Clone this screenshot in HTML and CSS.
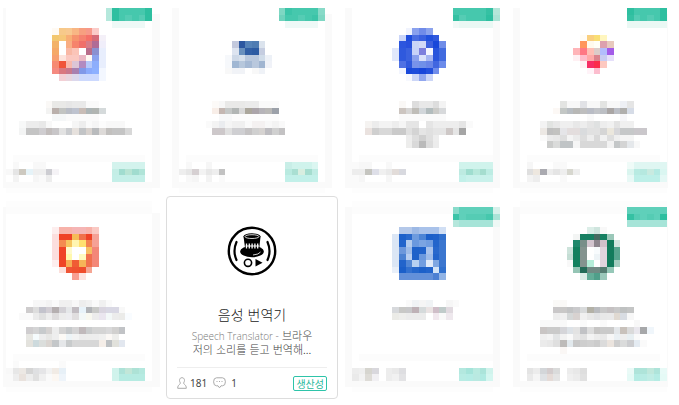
FILE: index.html
```html
<!DOCTYPE html>
<html lang="ko">
<head>
    <meta charset="UTF-8">
    <meta name="viewport" content="width=device-width, initial-scale=1.0">
    <title>음성 번역기</title>
    <link rel="stylesheet" href="styles.css">
</head>
<body>
    <main class="card-grid">
        <div class="card" data-mosaic="0"></div>
        <div class="card" data-mosaic="1"></div>
        <div class="card" data-mosaic="2"></div>
        <div class="card" data-mosaic="3"></div>
        <div class="card lower" data-mosaic="4"></div>

        <article class="app-card">
            <svg class="app-icon" viewBox="0 0 50 50" aria-hidden="true">
                <circle cx="25" cy="25" r="23.2" fill="none" stroke="#000" stroke-width="2.4"/>
                <path d="M9.500 16 Q5.500 25 9.500 34 M40.500 16 Q44.500 25 40.500 34" fill="none" stroke="#000" stroke-width="2.2" stroke-linecap="round"/>
                <ellipse cx="25" cy="25.500" rx="11.800" ry="5.800"/>
                <path d="M16.500 10.500 L18.500 25 Q25 28 32 25 L33.500 10.500 Z"/>
                <ellipse cx="25" cy="10.500" rx="8.500" ry="3.200"/>
                <ellipse cx="25" cy="10.600" rx="7" ry="1.900" fill="none" stroke="#fff" stroke-width="0.800"/>
                <path d="M19.500 17.500 V22.500 M22.300 17.500 V22.500 M25.100 17.500 V22.500 M27.900 17.500 V22.500 M30.700 17.500 V22.500" stroke="#fff" stroke-width="1.300"/>
                <path d="M18.500 20 H32" stroke="#fff" stroke-width="1"/>
                <path d="M26 29 Q32 28.500 33.500 26" fill="none" stroke="#fff" stroke-width="0.800"/>
                <circle cx="21" cy="36.800" r="3.600" fill="none" stroke="#000" stroke-width="1.600"/>
                <path d="M28.500 33 L35.500 36.800 L28.500 40.600 Z"/>
            </svg>
            <h3 class="app-title">음성 번역기</h3>
            <p class="app-desc"><span class="latin">Speech Translator -</span> 브라우<br>저의 소리를 듣고 번역해...</p>
            <footer class="app-footer">
                <span class="stat">
                    <svg class="stat-icon person" viewBox="0 0 10 12" aria-hidden="true">
                        <path d="M3.500 6 C1.800 4 2.300 0.700 5 0.700 C7.700 0.700 8.200 4 6.500 6 C6.700 7.500 9.300 7.500 9.300 11.300 H0.700 C0.700 7.500 3.300 7.500 3.500 6 Z"/>
                    </svg>
                    <span>181</span>
                </span>
                <span class="stat">
                    <svg class="stat-icon bubble" viewBox="0 0 13 12" aria-hidden="true">
                        <path d="M3.500 0.800 H9.500 Q12.400 0.800 12.400 4.800 Q12.400 8.800 9.500 8.800 H8 L6.500 10.800 L5 8.800 H3.500 Q0.600 8.800 0.600 4.800 Q0.600 0.800 3.500 0.800 Z"/>
                        <path d="M3.500 4.500 H4.500 M6 4.500 H7 M8.500 4.500 H9.500"/>
                    </svg>
                    <span>1</span>
                </span>
                <a class="tag" href="#">생산성</a>
            </footer>
        </article>

        <div class="card lower" data-mosaic="5"></div>
        <div class="card lower" data-mosaic="6"></div>
    </main>

    <script src="mosaic.js"></script>
</body>
</html>
```
FILE: styles.css
```css
* {
    box-sizing: border-box;
}

body {
    font-family: 'Noto Sans CJK KR', sans-serif;
    background-color: #fff;
    color: #444;
    margin: 0;
}

.card-grid {
    display: grid;
    grid-template-columns: 146fr 146fr 141fr 147fr;
    gap: 25px 27px;
    padding: 8px 12px 24px 6px;
}

/* pixelated cards */
.card {
    min-width: 0;
    background-color: #fff;
    box-shadow: -7px 0 0 #fafafa, 7px 6px 0 #fafafa, -7px 6px 0 #fafafa, 0 11px 0 #fdfdfd;
}

.card:nth-child(4n+1) {
    box-shadow: -3px 0 0 #fafafa, 8px 6px 0 #fafafa, -3px 6px 0 #fafafa, 0 11px 0 #fdfdfd;
}

.card:nth-child(4n) {
    box-shadow: -7px 0 0 #fafafa, 1px 6px 0 #fafafa, -7px 6px 0 #fafafa, 0 11px 0 #fdfdfd;
}

.card.lower {
    background-image: linear-gradient(#fcfcfc 7px, #fff 7px);
}

.card.lower::before {
    content: "";
    display: block;
    height: 6px;
    margin-top: -6px;
    background-color: #fdfdfd;
}

.mosaic {
    display: block;
    width: 100%;
    overflow: visible;
    shape-rendering: crispEdges;
}

.ribbon {
    height: 20px;
}

.icon {
    height: 53px;
}

.title {
    height: 20px;
    margin-top: 20px;
}

.desc {
    height: 34px;
}

.foot {
    height: 27px;
}

/* readable card */
.app-card {
    margin: -11px -13px -18px;
    padding: 29px 10px 0;
    background-color: #fff;
    border: 1px solid #ddd;
    border-radius: 4px;
    text-align: center;
    position: relative;
}

.app-icon {
    display: block;
    width: 50px;
    height: 50px;
    margin: 0 auto;
}

.app-title {
    margin: 28px 0 0;
    font-size: 14px;
    font-weight: 300;
    line-height: 20px;
    color: #222;
}

.app-desc {
    margin: 4px 0 11px;
    font-size: 11px;
    font-weight: 300;
    line-height: 14px;
    color: #444;
    white-space: nowrap;
}

.latin {
    font-family: 'Open Sans', sans-serif;
    font-size: 10px;
    line-height: 10px;
    color: #777;
}

.app-footer {
    display: flex;
    align-items: center;
    gap: 6px;
    height: 31px;
    border-top: 1px solid #eee;
    font-family: 'Noto Sans', 'Noto Sans CJK KR', sans-serif;
    font-size: 10px;
}

.stat {
    display: flex;
    align-items: center;
    gap: 3px;
}

.stat-icon {
    height: 12px;
    fill: none;
    stroke: #aaa;
    stroke-width: 1;
}

.person {
    width: 10px;
}

.bubble {
    width: 13px;
    margin-right: 2px;
}

.tag {
    margin-left: auto;
    padding: 0 2px;
    border: 1px solid #2ec4a9;
    border-radius: 2px;
    font-family: 'Noto Sans CJK KR', sans-serif;
    font-size: 10px;
    line-height: 13px;
    color: #1fb89c;
    text-decoration: none;
}
```
FILE: mosaic.js
```js
// Each row is "startColumn: colour colour ...", a dot leaves a cell empty,
// "colour*n" repeats a cell.
const line = '1: fcfcfc*20';

const cards = [
    {
        cols: 22,
        ribbon: [
            '15: b5e8dc 2ebfa0 46c8ad*4 2ebfa0',
            '15: b5e8dc 2ebfa0 46c8ad 55ccb4 46c8ad 55ccb4 2ebfa0',
            '16: eef9f7*5'
        ],
        icon: [
            '7: fffaf3 f7c98a f8c890 f8b684 f79f80 f7998a fbcbc8',
            '7: f3c76f f6c779 f8ae75 f6936d f58270 f57068 d56b78 f4f0f8',
            '7: f3b268 . f8ad83 f6836c f06f6a d87c88 b06c96 f0eefa',
            '7: f5a968 . f9b8a5 fbc4b8 . b86d8a 8b90d0 e8eefd',
            '7: f7a070 fde3dc fbc8c0 fbc8c0 eab8c4 fff8f2 8ba2ee e8eefd',
            '7: f68a72 f0543a f8b8ac dcc5d6 b28ac0 b5c8fa 8daefc e8eefd',
            '7: f58a80 d9787f c9788c a880b0 8098e8 8aaafc 8db0ff f3f7ff',
            '8: f3d0d5 e8d5de dcd8ec cdd9fc ccd9fe ccd9fe f3f7ff'
        ],
        title: [
            '6: faf8f6 e9e9e7*2 e6e6e6 e9e9e9*2 fafafa*2',
            '6: f3f3f2 bab0ac c2c4c2 b9bdc6 bec3cf c8bcb6 adb5b6 b1b5b2 d5dadb',
            '7: f5f7f8*2 fafafa*5'
        ],
        desc: [
            '2: f7f8f8 ececec*2 e8e8e8 f8f8f8 . . . f5f5f5 ededed fafafa f5f5f5 fcfcfc f8f8f8*3',
            '2: f3f4f4 c4c4c4*2 cfcdd0 c2bdbc c8c6c8 e2e2e2 cacccf e6e1dd c2c4c6 d8d2ce b9bbbd dddad8 c2c0be c4c4c4*2 d8d8d8'
        ],
        foot: [
            line,
            '1: f8f8f8 . . f8f8f8 f8f8f8 . . . . . . . . . . d3f3ed*5',
            '0: f8f8f8 e5e5e5 cdc9c0 e6f3f8 efefef*2 cdcdd2 f5f3f6 . . . . . . . . c4eee6 a0dccf b8e4d4 a0dccf b0e4d8',
            '1: f3f3f3 . . f6f6f6 fafafa ededed . . . . . . . . . c4efe8*5'
        ]
    },
    {
        cols: 22,
        ribbon: [
            '15: 7fd7c3 3cc4a8 46c8ad*4 88dac8',
            '15: 6fd2bc 46c8ad*2 55ccb4 46c8ad 3cc4a8 7fd7c3',
            '16: eef9f7*5'
        ],
        icon: [
            '0:', '0:',
            '8: c3c9dd 2c57a0 5683b8 4f7cb2 dbe3ed',
            '8: dde4f0 6990bd 315fa5 2c5ba2 c5cde0',
            '7: f6f8fb ced9e8 d6e0ec b9c8dd*2 d0dce9 edf1f7',
            '7: f6f8fb a0b7d3 b6c7dc a5b9d4 b9c8dd a0b5d1 f0f2f8',
            '7: f8f8f8 f1f3f7*2 . f8f8f8 eff2f7',
            '0:'
        ],
        title: [
            '5: fcfaf8 f7f7f7 e9e9e8*3 ebebeb*2 fafafa*3',
            '5: f8eee8 c4b7b2 c5c8c7 b2b6b5 d8d8d8 aba79c aba5aa b5b3b8 b9b8b6 9ca1a9',
            '6: f7f8f9*2 fcfcfc*7'
        ],
        desc: [
            '4: fafafa f3f3f3 eaecef f5f5f5 f0f0f0*2 fafafa f4f1f1*2 f8f8f8 f3f3f3 f9f9f9',
            '5: cdc8ca cdc8ca e0e0e0 cfcfd2*2 c5c3c4 d0d0d0 d6d3d1 bebdc1 d0d0d0 c3c2c3'
        ],
        foot: [
            line,
            '1: f8f8f8 . . f6f6f6 . . . . . . . . . . . c8eee7 d0f3ec*3 dbf6f1',
            '0: eeeeee e7e7e7 d6d0d2 f3f3f3 e8e8e8 eeeeee c2c2c2 . . . . . . . . . b9eae0 a9dfd2 d8eee0 a5ddcf c0ece4',
            '1: f8f8f8 f5f5f5 . f3f3f3 . fafafa . . . . . . . . . c2f0e9*5'
        ]
    },
    {
        cols: 21,
        ribbon: [
            '15: 46c8ad*5 35c1a3 b5e6d9',
            '15: 35c1a3 55ccb4 46c8ad*3 2ebfa0 abe3d5',
            '15: f1f9f7 eaf8f4*5'
        ],
        icon: [
            '8: f0f3fd 8aa1ee 708be9 8ca3ed',
            '7: cad5f8 1f4ddc 4a6de2 3a60e0 2150dd 3059dd',
            '7: 2c56de 2850dd cad4f7 d2d9f7 3d60de 1847da 6f8ce8',
            '6: e1e8fb 2f59dd 3b62de c8d2f8 7d7fdd f4f5fe 2854dc 416adf',
            '6: e1e8fb 2f59dd 3b62de 8ba0ed d9e0fa a5b5f1 2a54dc 416adf',
            '7: 4f71e3 3059dd 7892ea 7090e8 6985e7 4166e0 6c8bea',
            '7: f2f5fe 1a49da 1d4cdb 1745da 2350dc 718dea',
            '8: f6f8fe ccd6f7 91a7ef ccd6f7'
        ],
        title: [
            '7: faf8f6 . dddddd e8e8e8*2 dddddd f3f3f3',
            '7: ccc5c0 d7d6d5 bfbdb8 d1d6da b2bcbd cbcbc8 d7d9db',
            '7: fafafa*7'
        ],
        desc: [
            '2: f5f3f1 ececec f3f3f3*2 ededed f5f5f5 e5e5e5*2 . e5e5e5 ededed*4 e5e5e5 fafafa',
            '2: eae2df cfcfcf d8d8d8*2 cacaca*2 e0e0e0 d4d4d4 e5e5e5 e0e0e0 e5e5e5*2 cec8c7 e5e5e5 a5a5a5',
            '8: ededed dedede d0d0d0 dfdfdf ededed',
            '8: ededec d9d9d9 bababa dcdcdc ececec'
        ],
        foot: [
            line,
            '0: fafafa f7f7f7*2 . . f8f8f8 . . . . . . . . . . d0f3ec*5',
            '0: ededed ededed c5c5c0 dedfe8 f0f0f0 eaeaea e2dcd9 d8d9df . . . . . . . . bdeae1 9fddcf b7e8db a5ddcf bdece3',
            '0: fafafa f6f6f6 . . . f6f6f6 . . . . . . . . . . c2f0e9 c9f1eb*4'
        ]
    },
    {
        cols: 22,
        ribbon: [
            '16: 2ebfa0 46c8ad*4 2ebfa0',
            '16: 35c1a3 55ccb4 46c8ad 55ccb4 46c8ad 2ebfa0',
            '16: eaf8f4*6'
        ],
        icon: [
            '0:',
            '9: fffcf6 facf7e f9de75 fff6bf',
            '9: ff965b fffaed fffff7 dda0ae e8c9bd',
            '8: ffb4b8 ff7883 ffbfb5 dccdc9 b2bdfc a35be8',
            '8: fff0f3 ffbcca ffaaa8 db848d c8ccf1 e6e0fb',
            '9: fff0f3 f72d64 fb2c4a fdc8c0',
            '10: fff3f8 fcbdce',
            '0:'
        ],
        title: [
            '6: e3e4e2 f8f8f8*2 e1e2e6 f8f8f8*2 e3e4e2 f8f8f8*2 eef0f5 e5e5e5',
            '5: fcf8f5 c3c7c5 b8bdc2 b8b8b6 bebebe b9bcc5 c2c4c8 bcbfc4 aaa6a5 bcbfc6 b0afad d6dce7',
            '10: f9f9f9 . . . . f6f6f9'
        ],
        desc: [
            '3: f3f3f3 e1e3e1 e8e8e8 efefef*2 e8e8e8 ededed e5e5e5 dfe1e1 ededed f1f1f1 e3e3e3 f0f0f0*2',
            '3: ece8e4 bfbfbf c2c2c0 e5e5e8 e3dddd*2 d9dbdd e1e1e1*2 d5d5d5 ebe7dd d7d7da c6c8c9*2 cac7cb*2',
            '3: fafafa ebebeb e8e8e8 dedede f4f4f4 ebebeb dddddd ededed d9d9d9 f1f1f1 dedede efefef f5f5f5*2',
            '4: cbcccb dadbda c0c4c6*2 f5f5f5 d8d8d8*4 f2f2f2 c4c7c8 d4d4d4 e5e8eb f8f8f8'
        ],
        foot: [
            line,
            '1: f6f6f6 . . . f9f9f9*2 . . . . . . . . . effbf8 dff6f2*5',
            '1: dfdfdf ede7df aaaab0 ededed e5e5e5 eeeeee d7d7cf eeeeee . . . . . . . daf5ef b8ebe2 b5e8df c9eae0 b4eae3 daf6f1',
            '1: f3f3f3 ededed . . . f9f9f9 . . . . . . . . . e8f9f6 bdefe8*4 e4f8f5'
        ]
    },
    {
        cols: 22,
        ribbon: [],
        icon: [
            '7: fdeeee f7b2aa*2 f5b5b5*2 f7b2aa fac9c3',
            '7: fcdedd ef4126 ef4126 f6bb58 f0704a ef4126 f5a196',
            '7: fcdedd f48b50 f6c55f fff5b0 ffe070 f48250 f5a196',
            '7: fcdedd ef4527 fffacb . . f6bd62 f38778',
            '7: fcdedd ef4527 fff9ad . fffac0 f1704d f38778',
            '7: fdeeee ef4527 f7ad55 f05c34 f6b458 f1704d f38778',
            '8: fce0dc ef5536 ef5130 ef4d2d f5a593',
            '10: f89f92 fde4e1'
        ],
        title: [
            '4: f7f7f7*2 f3f3f3 fafafa f0f0f0*2 f8f8f8 ededed f1f1f1 fafafa f0f0f0 fafafa',
            '3: cecccd dddddd c3c3cc d2ced4 b5afb0 d3d1d6 e5e7e9 c2bdc2 e8f3fa b2b4b8 c9cac8 d9d5df d9d8e4*2 f8f8f8',
            '2: fafafa fafafa ebebeb e0e0e0 ededed dedcdd ececec ededf0 e0dedf f3f8f8 f8f8f0 ececec eae6ef f3f8f8 ececec ebebe9 f9fcff'
        ],
        desc: [
            '0:',
            '3: cfcdcf d4d4d5 c7cacc d5d2d1 ededed d4d4d4 c6c9cb d5d4d5 c0b9bb cacccd d4d4d4*2 d9d9da d1d0cf c1c3c6',
            '3: e7e7e3 f5fbfd ededed e7e7e5 eeeeee fcfaf6 edf4f7 f3f3f3 ececec ededec ededed f0f0ef fbf8f5 eeeeec',
            '3: e3e2dd cddadd dbdedc dad5d1 c4c7c9 e5e7e9 c8cbcc d7d7d7*4 f5eee8 bec1c3 e1e1db e2e7ef'
        ],
        foot: [
            line,
            '1: fafafa . . . . . . fafafa',
            '0: f8f8f8 e7e7e7 ece8e4 d5d5d5 dfe0e2 e5e5e7 f2f2f2 f1ebe5 e7f0f7 . . . . . . . d0f3ec ade2d8 c2e6d8 ade2d6 b4e8de',
            '0: fafafa eeeeee e9e2dd ededed e0e0e0 f0f0f0 fafafa fcf7f2 eef4fa . . . . . . . d0f3ec b6ebe2*4'
        ]
    },
    {
        cols: 21,
        ribbon: [
            '15: 88dbca 5fd0ba*5 d7f1eb',
            '15: 3cc4a8 5fd0ba 55ccb4*3 46c8ad a9e4d7',
            '15: b5e7dc a6e4d8*5 eef8f5'
        ],
        icon: [
            '7: b4c8e9*2 9db9e5 a9c2ea*3 d1dff4',
            '6: dbe6f5 1d61ca 2969cc 6d9bde 4c84d5 1b5fc9 1f61ca 3070cd',
            '6: dbe6f5 2264cb b3cbed 6b99de 7ba4e2 719de0 2365cb 3b76cf',
            '6: dbe6f5 6c97db 9fbce8 1e61c9 2062ca a9c3ec 2868cc 3b76cf',
            '6: dbe6f5 4b81d2 b7cdf0 1e61c9 6a98de 9dbbe9 2264cb 3b76cf',
            '6: dbe6f5 2264cb 5287d5 b6d0f1 719de0 e0eaf9 7fa7e2 3b76cf',
            '6: e8eff9 1b5fc9 3371cf 2567cb 1c60c9 2264cb d2e3f6 3070cd',
            '7: 6390d9*5 4d80d2 92b4e5'
        ],
        title: [
            '8: fafafa f0f3f5 f5f5f5 f0f3f5 . . f6f6f6 fafafa',
            '6: d7d9dc c8c8c6 c8c8ca beb1b6 d5dadb eae3e3 cfbec8 c0cbca e1dae0',
            '6: ebebe7 eeeeec ebebeb*3 . f1e8ee f9f9f9 eee8ed'
        ],
        desc: [],
        foot: [
            line,
            '0:',
            '0: ededed efefef d6d5cf d9d8dd . ededed e9e9e9 dedee1 . . . . . . . . b3e8df a5e4da b9eae0 abe4da d0f3ec',
            '0: eaeaea f3f3f3 dedcd7 f1f0f3 . ededed f1f1f1 e3e3e5 . . . . . . . . b8ece4 b5ece5 b9e9e1 b0eae2 d4f6f0'
        ]
    },
    {
        cols: 22,
        ribbon: [
            '16: 5fd0ba*6',
            '16: 35c1a3 55ccb4 5fd0ba 55ccb4 5fd0ba 2ebfa0',
            '16: a6e4d8*6'
        ],
        icon: [
            '10: dceee8 cfe5de f8f8f8',
            '8: f3f5f4 178062*2 456b61 178062 9bc8b9',
            '8: 20886b 788e89 d3c5cf 8e868e d2c0ca 117a5b d1e5df',
            '7: cde3db 13805e 84938f . f8fbfd e1d4dd 127b5c 57a58f',
            '7: c4ddd4 13805e 84938f . eef4f7 e1d4dd 127b5c 57a58f',
            '7: f8f8f8 13805e 84938f b5eed9 . e1d4dd 127b5c a4cdc0',
            '8: 95c5b5 236b58 708b84*2 557c71 96c8b8',
            '9: dcece7 63ad98 4f9f8a 9bc8ba'
        ],
        title: [
            '5: faf9f7*2',
            '5: c9c7c8 c9c8c7 c2c3c4 cacacc d8dadb b3b1a7 b9bbbf c8c8c8 c5c1c2 c9c9c9 bfc1c1 c4c5c5',
            '5: ededed f0f0f0 d5d8d8 d8d2d0 f0f0f0 e8e8e8 e2e3e5 e8e8e8 e9e9e9 e0d9d1 d8dce2 f7f7f7'
        ],
        desc: [
            '3: f9f9f9*4 . . fafafa . . fafafa . . . . f8f8f8',
            '3: c9c5c4 cacaca*2 d5d5d9 dde2e7 e3e3e3 c1c2c5 dddddd c7c6c5 cacaca*2 e4e7ea c8c1bb dadada e9e7ed a7a8aa f0f6fb',
            '3: f0f0f0 f4f4f4 e3e5e6 f2f2f2 fafafa e8e8e8 e1e1e1 f3f3f3 ececec e9e9e9 f7f7f7 eaf0f4 eeeeee e8eff2 fafafa',
            '3: ebebeb e8e8e8 dfdfdf bdbbb9 e2e9ed c8c8c8 cecece d1d1d1 cccccc dbdbdb ebe4de cecece dadbdb cccdd0 e4ebf2 fafafa',
            '6: faf7f5'
        ],
        foot: [
            line,
            '0:',
            '1: e4e4e4 ececec d3d6d9 d3cccd dadbdb . ececec e8e8e8 dedede . . . . . . eafaf7 aee4da aee4d9 c0e8dc aee4da e8faf7',
            '1: eaeaea f5f5f5 dfe2e5 e5dbd7 e4e4e4 . f0f0f0 ececec e1e1e1 . . . . . . e5faf6 b5ece4 b8ece4 c0ede5 b5ece4 e5faf6'
        ]
    }
];

// number of rows that every part of a card holds
const parts = { ribbon: 3, icon: 8, title: 3, desc: 5, foot: 4 };
const SVG = 'http://www.w3.org/2000/svg';

function addCell(svg, x, y, width, fill) {
    const rect = document.createElementNS(SVG, 'rect');
    rect.setAttribute('x', x);
    rect.setAttribute('y', y);
    rect.setAttribute('width', width);
    rect.setAttribute('height', 1);
    rect.setAttribute('fill', '#' + fill);
    svg.appendChild(rect);
}

function drawPart(card, name) {
    const svg = document.createElementNS(SVG, 'svg');
    svg.setAttribute('class', 'mosaic ' + name);
    svg.setAttribute('viewBox', '0 0 ' + card.cols + ' ' + parts[name]);
    svg.setAttribute('preserveAspectRatio', 'none');
    svg.setAttribute('aria-hidden', 'true');

    card[name].forEach(function (row, y) {
        const [start, cells] = row.split(':');
        let x = Number(start);
        cells.trim().split(' ').forEach(function (cell) {
            const [fill, repeat] = cell.split('*');
            const width = Number(repeat || 1);
            if (fill && fill !== '.') {
                addCell(svg, x, y, width, fill);
            }
            x += width;
        });
    });
    return svg;
}

document.querySelectorAll('[data-mosaic]').forEach(function (el) {
    const card = cards[el.dataset.mosaic];
    Object.keys(parts).forEach(function (name) {
        el.appendChild(drawPart(card, name));
    });
});
```
